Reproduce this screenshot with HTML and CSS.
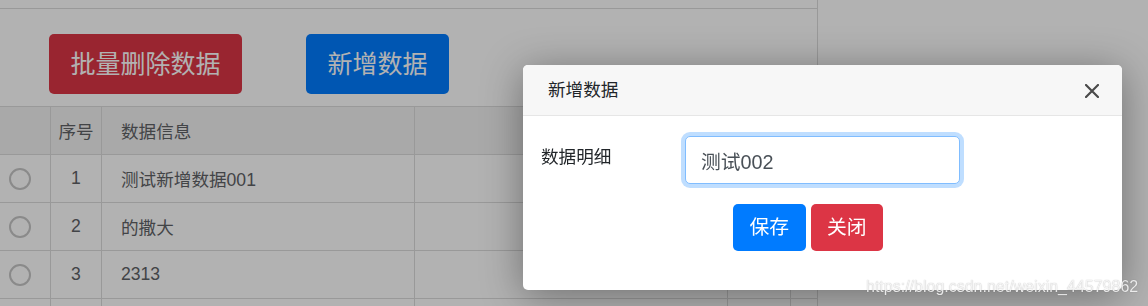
FILE: index.html
```html
<!DOCTYPE html>
<html lang="zh-CN">
<head>
<meta charset="utf-8">
<title>数据管理</title>
<link rel="stylesheet" href="styles.css">
</head>
<body>
<div class="page">
  <div class="topbar"></div>
  <div class="toolbar">
    <button class="tbtn tbtn-danger">批量删除数据</button>
    <button class="tbtn tbtn-primary">新增数据</button>
  </div>
  <div class="table">
    <div class="tr head">
      <div class="td td-radio"></div>
      <div class="td td-num">序号</div>
      <div class="td td-text">数据信息</div>
      <div class="td"></div>
      <div class="td"></div>
      <div class="td td-last"></div>
    </div>
    <div class="tr">
      <div class="td td-radio"><span class="radio"></span></div>
      <div class="td td-num">1</div>
      <div class="td td-text">测试新增数据001</div>
      <div class="td"></div>
      <div class="td"></div>
      <div class="td td-last"></div>
    </div>
    <div class="tr">
      <div class="td td-radio"><span class="radio"></span></div>
      <div class="td td-num">2</div>
      <div class="td td-text">的撒大</div>
      <div class="td"></div>
      <div class="td"></div>
      <div class="td td-last"></div>
    </div>
    <div class="tr">
      <div class="td td-radio"><span class="radio"></span></div>
      <div class="td td-num">3</div>
      <div class="td td-text">2313</div>
      <div class="td"></div>
      <div class="td"></div>
      <div class="td td-last"></div>
    </div>
    <div class="tr tr-partial">
      <div class="td td-radio"></div>
      <div class="td td-num"></div>
      <div class="td td-text"></div>
      <div class="td"></div>
      <div class="td"></div>
      <div class="td td-last"></div>
    </div>
  </div>
</div>

<div class="backdrop"></div>

<div class="modal">
  <div class="modal-header">
    <h5 class="modal-title">新增数据</h5>
    <button class="close" aria-label="关闭">
      <svg width="14" height="14" viewBox="0 0 14 14"><path d="M1 1 L13 13 M13 1 L1 13" stroke="#4a4a4a" stroke-width="2.2" stroke-linecap="round" fill="none"/></svg>
    </button>
  </div>
  <div class="modal-body">
    <div class="form-row">
      <label class="form-label" for="detail">数据明细</label>
      <input class="form-control" id="detail" type="text" value="测试002">
    </div>
    <div class="actions">
      <button class="btn btn-primary">保存</button>
      <button class="btn btn-danger">关闭</button>
    </div>
  </div>
</div>

<div class="watermark">https://blog.csdn.net/weixin_44579862</div>
</body>
</html>
```
FILE: styles.css
```css
html, body {
  margin: 0;
  height: 306px;
  overflow: hidden;
}
body {
  background: #fff;
  font-family: "Liberation Sans", "Noto Sans CJK SC", sans-serif;
  color: #212529;
  position: relative;
}

.page {
  width: 818px;
  height: 306px;
  overflow: hidden;
  border-right: 1px solid #dcdcdc;
  box-sizing: border-box;
}
.topbar {
  height: 8px;
  border-bottom: 1px solid #dcdcdc;
}
.toolbar {
  height: 97px;
  box-sizing: border-box;
  padding: 25px 0 0 49px;
  display: flex;
  align-items: flex-start;
  gap: 64px;
}
.tbtn {
  height: 60px;
  padding: 0 21.5px;
  border: none;
  border-radius: 5px;
  color: #fff;
  font-family: "Liberation Sans", "Noto Sans CJK SC", sans-serif;
  font-size: 25px;
  line-height: 60px;
}
.tbtn-danger { background: #dc3545; }
.tbtn-primary { background: #007bff; }

.table {
  border-top: 1px solid #dcdcdc;
}
.tr {
  display: grid;
  grid-template-columns: 51px 51px 313px 313px 63px 26px;
  height: 48px;
  box-sizing: border-box;
  border-bottom: 1px solid #dcdcdc;
}
.tr-partial {
  height: 8px;
  border-bottom: none;
}
.tr.head {
  background: #f2f2f2;
}
.td {
  border-right: 1px solid #dcdcdc;
  display: flex;
  align-items: center;
  font-size: 17.6px;
  color: #5f6266;
}
.td-last { border-right: none; }
.td-num { justify-content: center; }
.td-text { padding-left: 19px; }
.td-radio { padding-left: 9px; }
.radio {
  width: 22px;
  height: 22px;
  box-sizing: border-box;
  border: 2px solid #c6c6c6;
  border-radius: 50%;
  background: #fff;
}

.backdrop {
  position: fixed;
  inset: 0;
  background: rgba(0, 0, 0, 0.3);
}

.modal {
  position: absolute;
  left: 523px;
  top: 65px;
  width: 599px;
  background: #fff;
  border-radius: 5px;
  overflow: hidden;
  box-shadow: 0 6px 40px rgba(0, 0, 0, 0.38);
}
.modal-header {
  height: 51px;
  box-sizing: border-box;
  background: #f7f7f7;
  border-bottom: 1px solid #e6e6e6;
  display: flex;
  align-items: center;
  justify-content: space-between;
  padding: 0 23px 0 25px;
}
.modal-title {
  margin: 0;
  font-size: 17.6px;
  font-weight: normal;
  line-height: 26px;
  color: #212529;
}
.close {
  border: none;
  background: none;
  padding: 0;
  width: 14px;
  height: 14px;
  margin-top: 2px;
  display: flex;
}
.modal-body {
  padding: 20px 18px 39px;
}
.form-row {
  display: flex;
  align-items: flex-start;
}
.form-label {
  width: 144px;
  margin-top: 8px;
  font-size: 17.6px;
  line-height: 26px;
  color: #212529;
}
.form-control {
  width: 275px;
  height: 48px;
  box-sizing: border-box;
  border: 1px solid #80bdff;
  border-radius: 5px;
  box-shadow: 0 0 0 4px rgba(0, 123, 255, 0.25);
  outline: none;
  padding: 0 15px;
  font-family: "Liberation Sans", "Noto Sans CJK SC", sans-serif;
  font-size: 19.8px;
  color: #495057;
  background: #fff;
}
.actions {
  display: flex;
  gap: 5px;
  margin-top: 20px;
  padding-left: 192px;
}
.btn {
  height: 47px;
  padding: 0 16.5px;
  border: none;
  border-radius: 5px;
  color: #fff;
  font-family: "Liberation Sans", "Noto Sans CJK SC", sans-serif;
  font-size: 19.8px;
  line-height: 47px;
}
.btn-primary { background: #007bff; }
.btn-danger { background: #dc3545; }

.watermark {
  position: absolute;
  left: 866px;
  top: 278px;
  font-family: "Liberation Sans", sans-serif;
  font-size: 16px;
  line-height: 18px;
  color: rgba(255, 255, 255, 0.85);
  text-shadow: 0 0 1px rgba(0, 0, 0, 0.35);
  white-space: nowrap;
}
```
